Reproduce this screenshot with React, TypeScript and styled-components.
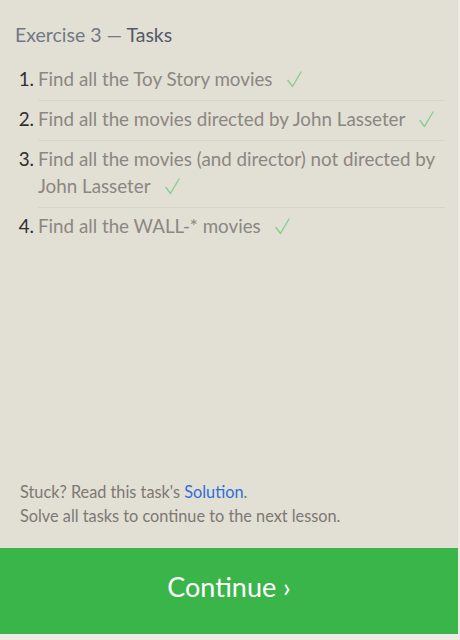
import React from "react";
import styled, { createGlobalStyle } from "styled-components";

const Global = createGlobalStyle`
  html, body { margin: 0; padding: 0; background: #eeebe4; }
  body { font-family: "Lato", "Open Sans", sans-serif; }
`;

const Panel = styled.div`
  width: 458px;
  height: 634px;
  background: #e2dfd4;
  display: flex;
  flex-direction: column;
`;

const Header = styled.h2`
  margin: 0;
  padding: 23px 15px 14px;
  font-size: 19.5px;
  font-weight: 400;
  line-height: 24px;
  color: #727886;
`;

const Strong = styled.span`
  color: #545a68;
`;

const List = styled.ol`
  list-style: none;
  margin: 0;
  padding: 0 13px 0 15px;
`;

const Item = styled.li`
  display: flex;
  align-items: flex-start;
`;

const Num = styled.span`
  width: 19px;
  flex: none;
  padding: 4px 4px 0 0;
  text-align: right;
  font-size: 18.8px;
  line-height: 27px;
  color: #2e2e2e;
`;

const Body = styled.div<{ $last?: boolean }>`
  flex: 1;
  padding: 4px 0 8px;
  border-bottom: 1px solid ${(p) => (p.$last ? "transparent" : "#d7d4c9")};
  font-size: 18.8px;
  line-height: 27px;
  color: #8b8782;
`;

const CheckMark = styled.svg`
  width: 15px;
  height: 17px;
  margin-left: 14px;
  vertical-align: -2px;
`;

const Spacer = styled.div`
  flex: 1;
`;

const Footer = styled.div`
  padding: 0 20px 20px;
  font-size: 16.3px;
  line-height: 24px;
  color: #7d7873;
`;

const Link = styled.a`
  color: #2f6fd8;
  text-decoration: none;
`;

const Button = styled.button`
  border: none;
  height: 86px;
  padding: 0 0 10px;
  background: #3ab54a;
  color: #ffffff;
  font-family: inherit;
  font-size: 27px;
  cursor: pointer;
`;

const tasks = [
  "Find all the Toy Story movies",
  "Find all the movies directed by John Lasseter",
  "Find all the movies (and director) not directed by John Lasseter",
  "Find all the WALL-* movies",
];

function Check() {
  return (
    <CheckMark viewBox="0 0 15 17" fill="none">
      <path d="M1 9.5 L5.5 15.5 L14 1" stroke="#86cf8e" strokeWidth="1.4" strokeLinecap="round" strokeLinejoin="round" />
    </CheckMark>
  );
}

export default function App() {
  return (
    <>
      <Global />
      <Panel>
        <Header>
          Exercise 3 — <Strong>Tasks</Strong>
        </Header>
        <List>
          {tasks.map((t, i) => (
            <Item key={i}>
              <Num>{i + 1}.</Num>
              <Body $last={i === tasks.length - 1}>
                {t}
                <Check />
              </Body>
            </Item>
          ))}
        </List>
        <Spacer />
        <Footer>
          Stuck? Read this task's <Link href="#">Solution</Link>.
          <br />
          Solve all tasks to continue to the next lesson.
        </Footer>
        <Button>Continue ›</Button>
      </Panel>
    </>
  );
}
